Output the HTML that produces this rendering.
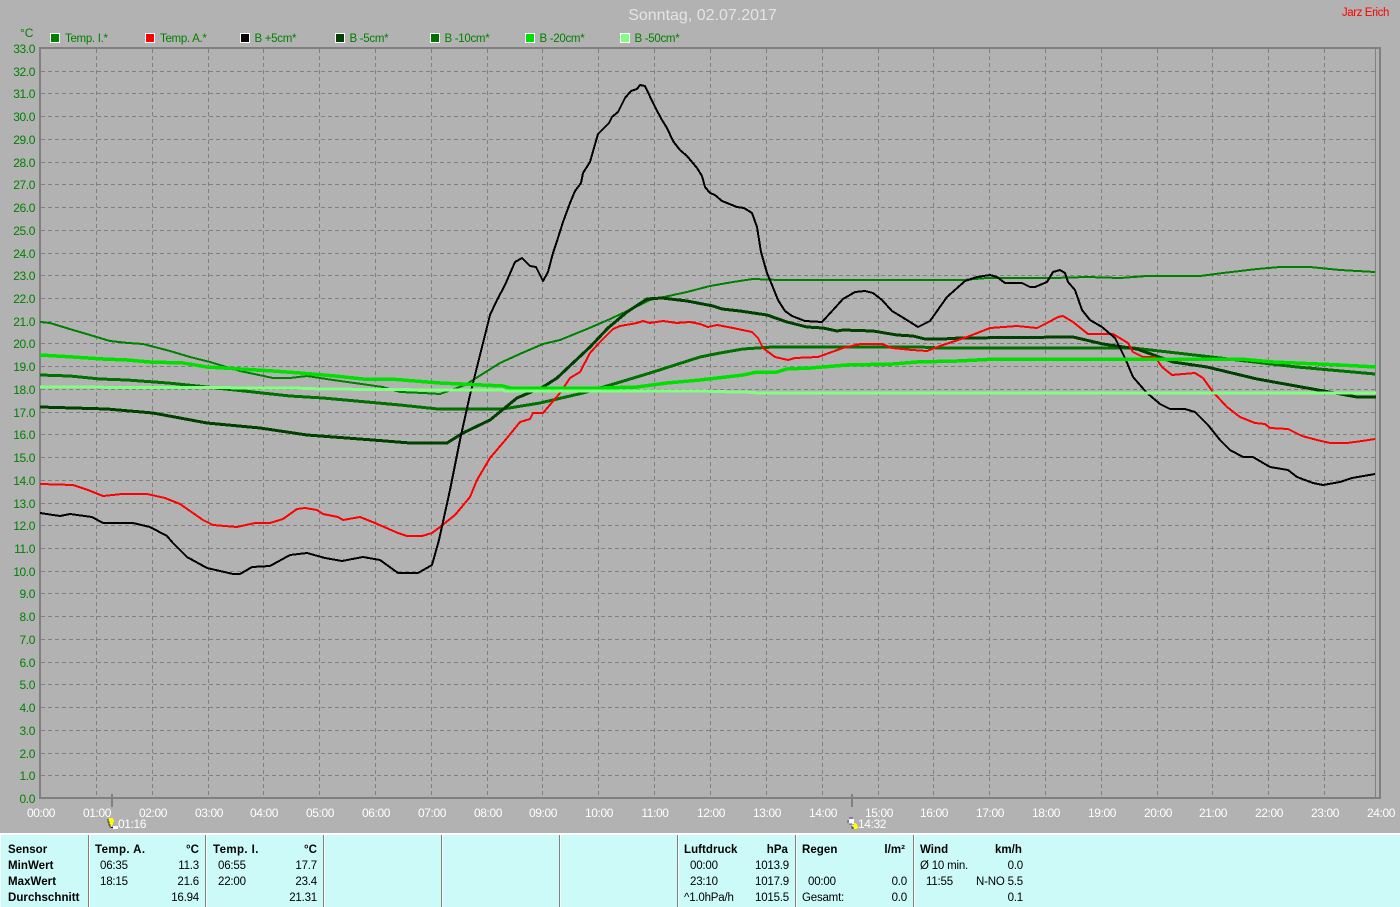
<!DOCTYPE html>
<html lang="de"><head><meta charset="utf-8"><title>Sonntag, 02.07.2017</title>
<style>
html,body{margin:0;padding:0;background:#b2b2b2;width:1400px;height:907px;overflow:hidden}
svg{display:block;font-family:"Liberation Sans",sans-serif;font-size:12px}
.y text{fill:#008000;text-anchor:end;letter-spacing:-.4px}
.x text{fill:#fff;text-anchor:middle;letter-spacing:-.4px}
.l text{fill:#008000;font-size:11.5px;letter-spacing:-.3px}
.l rect{stroke:#fff;stroke-width:1}
.t text{fill:#000;font-size:11.5px;letter-spacing:-.2px}
.t .b{font-weight:bold;letter-spacing:.05px}
.t .w{letter-spacing:.4px}
.e{text-anchor:end}
polyline{fill:none;stroke-linejoin:round;shape-rendering:crispEdges}
</style></head><body>
<svg width="1400" height="907" viewBox="0 0 1400 907" xmlns="http://www.w3.org/2000/svg">
<rect width="1400" height="907" fill="#b2b2b2"/>
<text x="702.5" y="20" text-anchor="middle" fill="#e4e4e4" font-size="16">Sonntag, 02.07.2017</text>
<text x="1389" y="16" text-anchor="end" fill="#ff0000" font-size="11.5" letter-spacing="-.4">Jarz Erich</text>
<text x="20" y="37" fill="#008000">°C</text>

<g class="l">
<rect x="50.5" y="33.5" width="9" height="9" fill="#008000"/><text x="65" y="42">Temp. I.*</text>
<rect x="145.5" y="33.5" width="9" height="9" fill="#ff0000"/><text x="160" y="42">Temp. A.*</text>
<rect x="240.5" y="33.5" width="9" height="9" fill="#000"/><text x="254.5" y="42">B +5cm*</text>
<rect x="335.5" y="33.5" width="9" height="9" fill="#004000"/><text x="349.5" y="42">B -5cm*</text>
<rect x="430.5" y="33.5" width="9" height="9" fill="#007000"/><text x="444.5" y="42">B -10cm*</text>
<rect x="525.5" y="33.5" width="9" height="9" fill="#00e000"/><text x="539.5" y="42">B -20cm*</text>
<rect x="620.5" y="33.5" width="9" height="9" fill="#80ff80"/><text x="634.5" y="42">B -50cm*</text>
</g>

<path shape-rendering="crispEdges" stroke="#808080" stroke-width="1" stroke-dasharray="4 3" fill="none" d="M41 71.5H1376M41 93.5H1376M41 116.5H1376M41 139.5H1376M41 162.5H1376M41 184.5H1376M41 207.5H1376M41 230.5H1376M41 253.5H1376M41 275.5H1376M41 298.5H1376M41 321.5H1376M41 343.5H1376M41 366.5H1376M41 389.5H1376M41 412.5H1376M41 434.5H1376M41 457.5H1376M41 480.5H1376M41 503.5H1376M41 525.5H1376M41 548.5H1376M41 571.5H1376M41 593.5H1376M41 616.5H1376M41 639.5H1376M41 662.5H1376M41 684.5H1376M41 707.5H1376M41 730.5H1376M41 753.5H1376M41 775.5H1376
M96.5 49V797M152.5 49V797M208.5 49V797M263.5 49V797M319.5 49V797M375.5 49V797M431.5 49V797M487.5 49V797M542.5 49V797M598.5 49V797M654.5 49V797M710.5 49V797M766.5 49V797M822.5 49V797M878.5 49V797M933.5 49V797M989.5 49V797M1045.5 49V797M1101.5 49V797M1157.5 49V797M1212.5 49V797M1268.5 49V797M1324.5 49V797"/>

<g shape-rendering="crispEdges" fill="#808080">
<rect x="39" y="47" width="1342" height="2"/>
<rect x="39" y="47" width="2" height="752"/>
<rect x="39" y="797" width="1342" height="2"/>
<rect x="1379" y="47" width="2" height="752"/>
<rect x="1375" y="49" width="1" height="748"/>
<rect x="111" y="794" width="2" height="13"/>
<rect x="851" y="794" width="2" height="13"/>
</g>

<g class="y">
<text x="35" y="53">33.0</text><text x="35" y="76">32.0</text><text x="35" y="98">31.0</text><text x="35" y="121">30.0</text><text x="35" y="144">29.0</text><text x="35" y="167">28.0</text><text x="35" y="189">27.0</text><text x="35" y="212">26.0</text><text x="35" y="235">25.0</text><text x="35" y="258">24.0</text><text x="35" y="280">23.0</text><text x="35" y="303">22.0</text><text x="35" y="326">21.0</text><text x="35" y="348">20.0</text><text x="35" y="371">19.0</text><text x="35" y="394">18.0</text><text x="35" y="417">17.0</text><text x="35" y="439">16.0</text><text x="35" y="462">15.0</text><text x="35" y="485">14.0</text><text x="35" y="508">13.0</text><text x="35" y="530">12.0</text><text x="35" y="553">11.0</text><text x="35" y="576">10.0</text><text x="35" y="598">9.0</text><text x="35" y="621">8.0</text><text x="35" y="644">7.0</text><text x="35" y="667">6.0</text><text x="35" y="689">5.0</text><text x="35" y="712">4.0</text><text x="35" y="735">3.0</text><text x="35" y="758">2.0</text><text x="35" y="780">1.0</text><text x="35" y="803">0.0</text>
</g>

<g class="x">
<text x="41" y="817">00:00</text><text x="97" y="817">01:00</text><text x="153" y="817">02:00</text><text x="209" y="817">03:00</text><text x="264" y="817">04:00</text><text x="320" y="817">05:00</text><text x="376" y="817">06:00</text><text x="432" y="817">07:00</text><text x="488" y="817">08:00</text><text x="543" y="817">09:00</text><text x="599" y="817">10:00</text><text x="655" y="817">11:00</text><text x="711" y="817">12:00</text><text x="767" y="817">13:00</text><text x="823" y="817">14:00</text><text x="879" y="817">15:00</text><text x="934" y="817">16:00</text><text x="990" y="817">17:00</text><text x="1046" y="817">18:00</text><text x="1102" y="817">19:00</text><text x="1158" y="817">20:00</text><text x="1213" y="817">21:00</text><text x="1269" y="817">22:00</text><text x="1325" y="817">23:00</text><text x="1381" y="817">24:00</text>
<text x="132" y="828">01:16</text><text x="872" y="828">14:32</text>
</g>

<!-- sunrise / sunset icons -->
<g shape-rendering="crispEdges">
<path d="M109 818h4v2h1v2h-1v3h-1v2h-2v-3h-1v-2h-1v-2h1z" fill="#ffff00"/>
<path d="M108 819v3h1v3h1v2h1" fill="none" stroke="#404040" stroke-width="1"/>
<rect x="113" y="826" width="5" height="3" fill="#fff"/><rect x="111" y="827" width="2" height="1" fill="#000080"/>
<rect x="849" y="819" width="5" height="5" fill="#fff"/>
<path d="M848 820v3M849 818h4M849 824h3" fill="none" stroke="#4848b0" stroke-width="1"/>
<path d="M854 823h2v1h1v2h1v2h-1v1h-3v-2h-2v-2h2z" fill="#ffff00"/>
<path d="M852 826v2h1v1" fill="none" stroke="#404040" stroke-width="1"/>
</g>

<!-- Temp I -->
<polyline stroke="#008000" stroke-width="2" points="40,322 50,323 73,330 90,335 110,341 128,343 143,344 170,351 190,357 210,362 223,366 240,371 273,378 290,378 307,376 333,380 383,387 400,392 423,393 440,394 465,385 500,363 522,353 543,344 560,340 587,329 608,320 623,313 650,300 687,292 710,286 733,282 753,279 780,280 963,280 987,278 1053,278 1087,277 1120,278 1147,276 1200,276 1223,273 1257,269 1280,267 1310,267 1340,270 1375,272"/>
<!-- B -10 -->
<polyline stroke="#007000" stroke-width="3" points="40,375 70,376 100,379 127,380 168,383 207,387 290,396 323,398 400,405 438,409 503,409 540,403 583,393 617,383 650,373 700,357 720,353 743,349 773,347 920,347 940,348 1133,348 1203,356 1297,367 1375,374"/>
<!-- B -5 -->
<polyline stroke="#004000" stroke-width="3" points="40,407 107,409 153,413 207,423 260,428 307,435 373,440 410,443 447,443 463,433 490,420 517,398 543,387 557,378 590,347 608,328 627,312 647,299 662,298 687,301 713,306 722,309 740,311 767,315 787,322 807,327 823,328 837,331 843,330 873,331 897,335 913,336 925,339 943,339 960,338 1073,337 1103,344 1137,349 1173,362 1207,367 1257,379 1307,388 1357,397 1376,397"/>
<!-- Temp A -->
<polyline stroke="#ff0000" stroke-width="2" points="40,484 73,485 88,490 103,496 122,494 147,494 165,498 180,504 203,520 213,525 237,527 255,523 270,523 283,519 297,509 305,508 317,510 323,514 338,517 343,520 360,517 375,523 398,533 407,536 422,536 432,533 440,527 455,515 470,497 477,480 490,458 507,438 520,422 530,419 533,413 543,413 560,393 570,378 580,372 590,353 600,342 613,329 620,326 637,323 643,321 650,323 663,321 677,323 690,322 700,324 708,327 717,325 733,328 752,332 758,338 763,348 775,357 788,360 795,358 818,357 843,348 860,344 882,344 892,348 912,350 927,351 940,346 967,337 990,328 1017,326 1037,328 1047,323 1058,317 1063,316 1073,322 1088,334 1113,334 1128,343 1133,352 1143,357 1155,357 1162,367 1172,375 1183,374 1195,373 1203,378 1213,392 1227,407 1240,417 1255,423 1265,424 1270,428 1288,429 1302,436 1317,440 1330,443 1347,443 1362,441 1375,439"/>
<!-- B +5 -->
<polyline stroke="#000" stroke-width="2" points="40,513 60,516 70,514 92,517 103,523 115,523 133,523 150,527 167,536 173,543 187,557 207,568 233,574 240,574 252,567 270,566 290,555 307,553 325,558 342,561 363,557 380,560 398,573 418,573 432,565 439,540 450,490 460,440 470,395 480,355 490,315 497,300 505,285 515,262 522,258 530,266 536,267 543,281 548,272 553,253 557,241 563,222 570,203 575,191 581,183 583,173 590,162 598,134 609,123 612,117 618,112 625,98 631,91 637,89 640,85 645,86 655,107 662,120 667,128 673,141 680,150 687,156 697,168 702,176 705,187 710,193 715,195 722,201 737,207 744,208 752,213 757,227 761,252 767,273 772,285 778,300 785,311 792,316 805,321 822,322 833,310 843,299 855,292 865,291 873,293 882,300 892,311 902,317 918,327 930,321 947,297 965,281 977,277 990,275 997,277 1005,283 1022,283 1030,287 1035,287 1047,282 1053,272 1060,270 1065,273 1068,282 1075,290 1082,310 1090,320 1102,327 1115,338 1125,358 1133,377 1147,393 1160,404 1170,409 1185,409 1195,412 1208,425 1220,440 1230,450 1243,457 1253,457 1270,467 1288,470 1297,477 1313,483 1323,485 1340,482 1352,478 1375,474"/>
<!-- B -20 -->
<polyline stroke="#00e000" stroke-width="3.5" points="40,355 73,357 103,359 127,360 150,362 183,363 207,367 240,369 273,371 300,373 335,376 363,379 390,379 440,383 503,386 510,388 603,388 637,387 667,383 700,380 743,375 757,372 777,372 787,369 810,368 847,365 893,364 917,362 957,361 997,359 1240,359 1273,362 1340,365 1376,367"/>
<!-- B -50 -->
<polyline stroke="#80ff80" stroke-width="3" points="40,387 293,388 322,389 440,390 503,390 505,391 700,391 733,392 743,392 760,393 1376,393"/>

<!-- table -->
<rect x="0" y="834" width="1400" height="73" fill="#ccfaf8" shape-rendering="crispEdges"/>
<rect x="0" y="833" width="1400" height="2" fill="#fff" shape-rendering="crispEdges"/>
<rect x="0" y="834" width="1" height="73" fill="#fff" shape-rendering="crispEdges"/>
<path shape-rendering="crispEdges" stroke="#808080" stroke-width="1" d="M88.5 835V907M205.5 835V907M323.5 835V907M441.5 835V907M559.5 835V907M677.5 835V907M795.5 835V907M913.5 835V907"/>
<path shape-rendering="crispEdges" stroke="#fff" stroke-width="1" d="M89.5 835V907M206.5 835V907M324.5 835V907M442.5 835V907M560.5 835V907M678.5 835V907M796.5 835V907M914.5 835V907"/>
<g class="t">
<text class="b" x="8" y="853">Sensor</text><text class="b" x="8" y="869">MinWert</text><text class="b" x="8" y="885">MaxWert</text><text class="b" x="8" y="901">Durchschnitt</text>
<text class="b w" x="95" y="853">Temp. A.</text><text class="b e" x="199" y="853">°C</text>
<text x="100" y="869">06:35</text><text class="e" x="199" y="869">11.3</text>
<text x="100" y="885">18:15</text><text class="e" x="199" y="885">21.6</text>
<text class="e" x="199" y="901">16.94</text>
<text class="b w" x="213" y="853">Temp. I.</text><text class="b e" x="317" y="853">°C</text>
<text x="218" y="869">06:55</text><text class="e" x="317" y="869">17.7</text>
<text x="218" y="885">22:00</text><text class="e" x="317" y="885">23.4</text>
<text class="e" x="317" y="901">21.31</text>
<text class="b" x="684" y="853">Luftdruck</text><text class="b e" x="788" y="853">hPa</text>
<text x="690" y="869">00:00</text><text class="e" x="789" y="869">1013.9</text>
<text x="690" y="885">23:10</text><text class="e" x="789" y="885">1017.9</text>
<text x="684" y="901">^1.0hPa/h</text><text class="e" x="789" y="901">1015.5</text>
<text class="b" x="802" y="853">Regen</text><text class="b e" x="905" y="853">l/m²</text>
<text x="808" y="885">00:00</text><text class="e" x="907" y="885">0.0</text>
<text x="802" y="901">Gesamt:</text><text class="e" x="907" y="901">0.0</text>
<text class="b" x="920" y="853">Wind</text><text class="b e" x="1022" y="853">km/h</text>
<text x="920" y="869">Ø 10 min.</text><text class="e" x="1023" y="869">0.0</text>
<text x="926" y="885">11:55</text><text class="e" x="1023" y="885">N-NO 5.5</text>
<text class="e" x="1023" y="901">0.1</text>
</g>
</svg>
</body></html>
